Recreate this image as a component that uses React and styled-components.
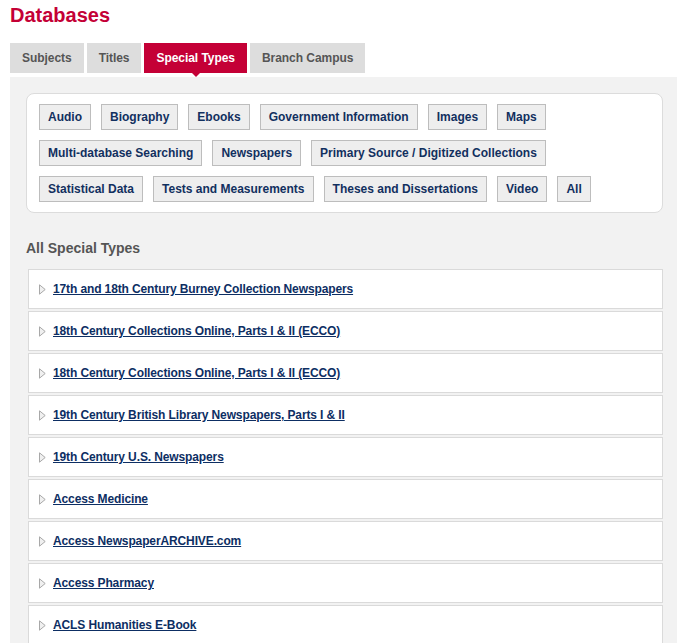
import React from 'react';
import styled, { createGlobalStyle } from 'styled-components';

const GlobalStyle = createGlobalStyle`
    body {
        margin: 0;
        background: #fff;
        font-family: "Liberation Sans", Arial, sans-serif;
    }
`

const Page = styled.div`
    padding: 3px 0 0 10px;
`
const Title = styled.h1`
    margin: 0 0 16px;
    font-size: 20px;
    line-height: 24px;
    font-weight: bold;
    color: #c40036;
`
const Tabs = styled.ul`
    display: flex;
    gap: 3px;
    list-style: none;
    margin: 0 0 4px;
    padding: 0;
`
const Tab = styled.li`
    position: relative;
    height: 30px;
    line-height: 30px;
    padding: 0 12px;
    font-size: 12px;
    font-weight: bold;
    letter-spacing: -0.05px;
    background: ${({ $active }) => ($active ? '#c40036' : '#dddddd')};
    color: ${({ $active }) => ($active ? '#fff' : '#555')};

    &::after {
        content: '';
        display: ${({ $active }) => ($active ? 'block' : 'none')};
        position: absolute;
        left: 50%;
        bottom: -4px;
        margin-left: -4px;
        border-left: 4px solid transparent;
        border-right: 4px solid transparent;
        border-top: 4px solid #c40036;
    }
`
const Panel = styled.div`
    background: #f2f2f2;
    padding: 16px 14px 0 16px;
`
const FilterBox = styled.div`
    display: flex;
    flex-wrap: wrap;
    gap: 10px;
    background: #fff;
    border: 1px solid #dcdcdc;
    border-radius: 8px;
    padding: 10px 12px;
`
const FilterButton = styled.button`
    height: 26px;
    padding: 0 8px;
    font-family: inherit;
    font-size: 12px;
    font-weight: bold;
    color: #12305f;
    background: #eeeeee;
    border: 1px solid #bdbdbd;
    cursor: pointer;
`
const SectionTitle = styled.h2`
    margin: 27px 0 13px;
    font-size: 14px;
    line-height: 16px;
    font-weight: bold;
    color: #555;
`
const List = styled.ul`
    list-style: none;
    margin: 0 0 0 2px;
    padding: 0;
    display: flex;
    flex-direction: column;
    gap: 2px;
`
const Item = styled.li`
    display: flex;
    align-items: center;
    gap: 7px;
    height: 40px;
    box-sizing: border-box;
    padding: 0 10px;
    background: #fff;
    border: 1px solid #dadada;
`
const ItemLink = styled.a`
    font-size: 12px;
    font-weight: bold;
    letter-spacing: -0.12px;
    color: #0d2e63;
    text-decoration: underline;
`

const Arrow = () => (
    <svg width="7" height="11" viewBox="0 0 7 11">
        <path d="M0.5 0.8 L6.2 5.5 L0.5 10.2 Z" fill="#f0f0f0" stroke="#a8a8a8" strokeWidth="1" />
    </svg>
);

const tabs = ['Subjects', 'Titles', 'Special Types', 'Branch Campus'];
const filters = [
    'Audio', 'Biography', 'Ebooks', 'Government Information', 'Images', 'Maps',
    'Multi-database Searching', 'Newspapers', 'Primary Source / Digitized Collections',
    'Statistical Data', 'Tests and Measurements', 'Theses and Dissertations', 'Video', 'All',
];
const databases = [
    '17th and 18th Century Burney Collection Newspapers',
    '18th Century Collections Online, Parts I & II (ECCO)',
    '18th Century Collections Online, Parts I & II (ECCO)',
    '19th Century British Library Newspapers, Parts I & II',
    '19th Century U.S. Newspapers',
    'Access Medicine',
    'Access NewspaperARCHIVE.com',
    'Access Pharmacy',
    'ACLS Humanities E-Book',
];

const App = () => {
    return (
        <>
            <GlobalStyle />
            <Page>
                <Title>Databases</Title>
                <Tabs>
                    {tabs.map((t) => (
                        <Tab key={t} $active={t === 'Special Types'}>{t}</Tab>
                    ))}
                </Tabs>
                <Panel>
                    <FilterBox>
                        {filters.map((f) => (
                            <FilterButton key={f}>{f}</FilterButton>
                        ))}
                    </FilterBox>
                    <SectionTitle>All Special Types</SectionTitle>
                    <List>
                        {databases.map((d, index) => (
                            <Item key={index.toString()}>
                                <Arrow />
                                <ItemLink href="#">{d}</ItemLink>
                            </Item>
                        ))}
                    </List>
                </Panel>
            </Page>
        </>
    )
}

export default App;
